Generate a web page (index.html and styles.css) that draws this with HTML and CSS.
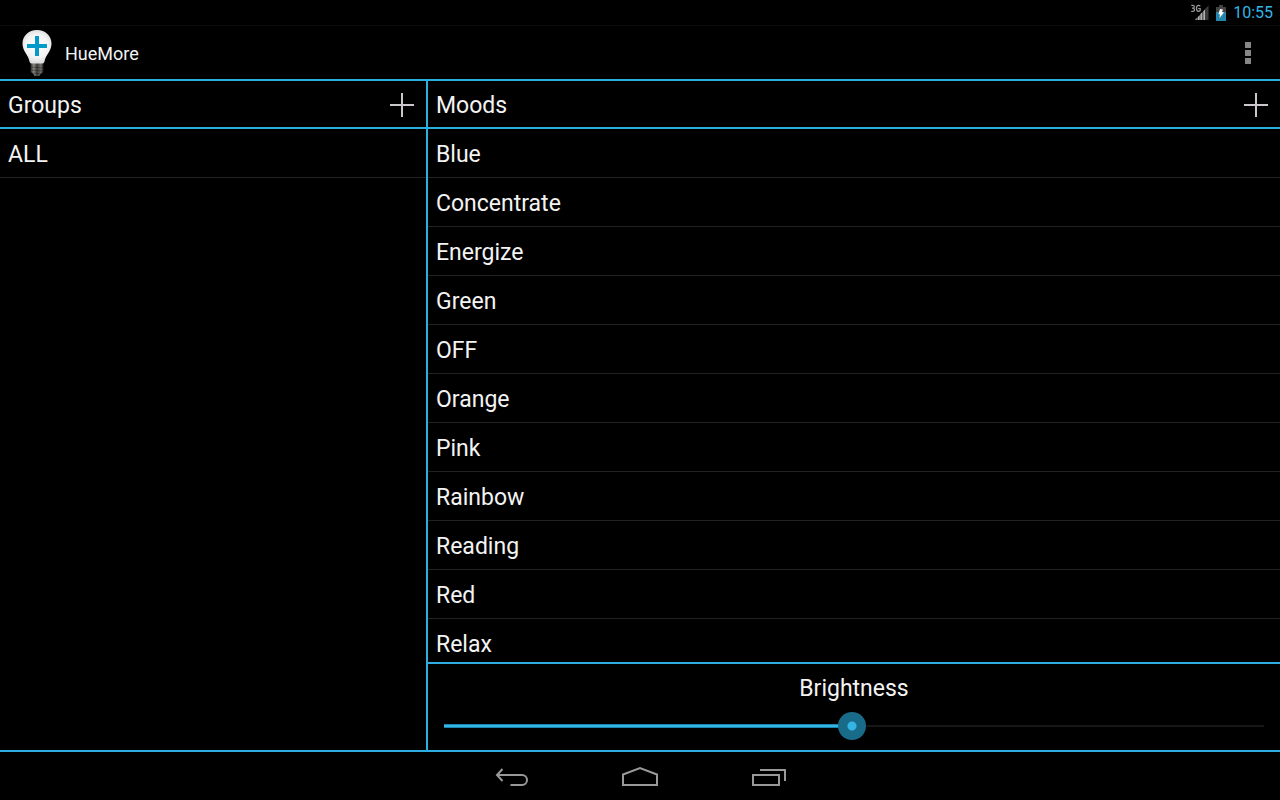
FILE: index.html
```html
<!DOCTYPE html>
<html lang="en">
<head>
<meta charset="utf-8">
<title>HueMore</title>
<meta name="viewport" content="width=device-width, initial-scale=1">
<link rel="stylesheet" href="styles.css">
</head>
<body>
<div class="status-bar">
  <svg class="signal" width="18" height="17" viewBox="0 0 18 17" role="img" aria-label="3G signal">
    <path d="M4 16l10-10.500V16z" fill="#5c5c5c"/>
    <path d="M14 16V5l3.500-3.500V16z" fill="#3a3a3a"/>
    <path d="M4.500 16v-1l1-1v2zM7 16v-3l1.500-1.500V16zM9.500 16v-6L11 8.500V16zM12.500 16V7L14 5.500V16z" fill="#b0b0b0"/>
    <g fill="none" stroke="#999" stroke-width="1.200">
      <path d="M.3 1.300h1.500q1.500 0 1.500 1.400T1.800 4.200H1h.8q1.700 0 1.700 1.600T1.800 7.300H.2"/>
      <path d="M9.200 2.300Q8.800 1.300 7.500 1.300q-2 0-2 3t2 3q1 0 1.700-.8V4.500H7.300"/>
    </g>
  </svg>
  <svg class="battery" width="10" height="16" viewBox="0 0 10 16" role="img" aria-label="Battery charging">
    <path d="M3 0h4v2h3v6H0V2h3z" fill="#444"/>
    <path d="M0 7h10v9H0z" fill="#2585ad"/>
    <path d="M4 4l3 .5L6 7l2 .5L3.500 13l.5-3.500L2.500 9z" fill="#fff"/>
  </svg>
  <time class="clock">10:55</time>
</div>
<header class="action-bar">
  <svg class="logo" width="32" height="48" viewBox="0 0 32 48" aria-hidden="true">
    <defs>
      <radialGradient id="glass" gradientUnits="userSpaceOnUse" cx="16" cy="17" r="21">
        <stop offset="0" stop-color="#fff"/>
        <stop offset=".55" stop-color="#f3f3f3"/>
        <stop offset="1" stop-color="#ccc"/>
      </radialGradient>
      <linearGradient id="metal">
        <stop offset="0" stop-color="#262626"/>
        <stop offset=".25" stop-color="#8c8a86"/>
        <stop offset=".5" stop-color="#3a3835"/>
        <stop offset=".8" stop-color="#77746f"/>
        <stop offset="1" stop-color="#1c1c1c"/>
      </linearGradient>
    </defs>
    <path d="M9.500 34h13v9l-3 2-1 2h-5l-1-2-3-2z" fill="url(#metal)"/>
    <path d="M10 38l12 1M10 41l12 1M12 44l8 1" stroke="#1c1c1c" stroke-width=".8" opacity=".6"/>
    <path d="M16 1C7.500 1 1.500 7 1.500 14.500c0 8 6 11.500 7 18q.3 2 2 2h11q1.700 0 2-2c1-6.500 7-10 7-18C30.500 7 24.500 1 16 1z" fill="url(#glass)"/>
    <path d="M14 7h4v8h8v4h-8v8h-4v-8H6v-4h8z" fill="#0499c9"/>
  </svg>
  <h1 class="title">HueMore</h1>
  <button class="overflow" type="button" aria-label="More options">
    <svg width="6" height="22" viewBox="0 0 6 22" fill="#868686"><path d="M0 0h6v6H0zM0 8h6v6H0zM0 16h6v6H0z"/></svg>
  </button>
</header>
<main class="panes">
  <section class="pane">
    <div class="pane-header">
      <h2 class="heading">Groups</h2>
      <button class="add" type="button" aria-label="Add group">
        <svg width="24" height="24" viewBox="0 0 24 24" fill="#cac6cc"><path d="M11 0h2v11h11v2H13v11h-2V13H0v-2h11z"/></svg>
      </button>
    </div>
    <ul class="list">
      <li class="item">ALL</li>
    </ul>
  </section>
  <section class="pane">
    <div class="pane-header">
      <h2 class="heading">Moods</h2>
      <button class="add" type="button" aria-label="Add mood">
        <svg width="24" height="24" viewBox="0 0 24 24" fill="#cac6cc"><path d="M11 0h2v11h11v2H13v11h-2V13H0v-2h11z"/></svg>
      </button>
    </div>
    <ul class="list">
      <li class="item">Blue</li>
      <li class="item">Concentrate</li>
      <li class="item">Energize</li>
      <li class="item">Green</li>
      <li class="item">OFF</li>
      <li class="item">Orange</li>
      <li class="item">Pink</li>
      <li class="item">Rainbow</li>
      <li class="item">Reading</li>
      <li class="item">Red</li>
      <li class="item">Relax</li>
    </ul>
    <div class="brightness">
      <label class="brightness-label" for="brightness">Brightness</label>
      <input class="slider" id="brightness" type="range" min="0" max="255" value="127">
    </div>
  </section>
</main>
<nav class="nav-bar" aria-label="System">
  <button class="nav-button" type="button" aria-label="Back">
    <svg width="36" height="24" viewBox="0 0 36 24" fill="none" stroke="#999" stroke-width="2"><path d="M8.500 5L3 11l5.500 6M3 11h25a5 5 0 0 1 0 10H16.500"/></svg>
  </button>
  <button class="nav-button" type="button" aria-label="Home">
    <svg width="36" height="24" viewBox="0 0 36 24" fill="none" stroke="#999" stroke-width="2"><path d="M1 21V10.500L18 4l17 6.500V21z"/></svg>
  </button>
  <button class="nav-button" type="button" aria-label="Recent apps">
    <svg width="36" height="24" viewBox="0 0 36 24" fill="none" stroke="#999" stroke-width="2"><path d="M3 11h26v10H3zM10 6h25v11"/></svg>
  </button>
</nav>
</body>
</html>
```
FILE: styles.css
```css
* {
  box-sizing: border-box;
}

body {
  display: flex;
  flex-direction: column;
  height: 100vh;
  margin: 0;
  background: #000;
  color: #f3f3f3;
  font-family: Roboto, "Noto Sans", sans-serif;
  font-size: 23px;
}

button {
  display: flex;
  align-items: center;
  justify-content: center;
  padding: 0;
  border: 0;
  background: none;
}

.status-bar {
  display: flex;
  flex: none;
  align-items: center;
  justify-content: flex-end;
  height: 26px;
  padding-right: 7px;
  border-bottom: 1px solid #0c0c0c;
}

.signal {
  margin-right: 7px;
}

.battery {
  margin-right: 7px;
}

.clock {
  color: #33b5e5;
  font-size: 16px;
  line-height: 24px;
}

.action-bar {
  display: flex;
  flex: none;
  align-items: center;
  height: 55px;
  padding-left: 21px;
  border-bottom: 2px solid #2caee0;
}

.title {
  flex: 1;
  margin: 0 0 0 12px;
  padding-top: 2px;
  font-size: 18px;
  font-weight: 400;
}

.overflow {
  width: 64px;
  height: 48px;
}

.panes {
  display: grid;
  flex: 1;
  grid-template-columns: 1fr 2fr;
  gap: 2px;
  min-height: 0;
  border-bottom: 2px solid #2caee0;
  background: #2caee0;
}

.pane {
  display: flex;
  flex-direction: column;
  min-width: 0;
  min-height: 0;
  background: #000;
}

.pane-header {
  display: flex;
  flex: none;
  align-items: center;
  justify-content: space-between;
  height: 48px;
  padding: 2px 0 0 8px;
  border-bottom: 2px solid #2caee0;
}

.heading {
  margin: 0;
  font-size: 23px;
  font-weight: 400;
}

.add {
  width: 48px;
  height: 44px;
}

.list {
  flex: 1;
  min-height: 0;
  margin: 0;
  padding: 0;
  overflow: hidden;
  list-style: none;
}

.item {
  height: 49px;
  padding-left: 8px;
  border-bottom: 1px solid #222;
  line-height: 52px;
}

.brightness {
  display: flex;
  flex: none;
  flex-direction: column;
  padding: 8px 16px;
  border-top: 2px solid #2caee0;
}

.brightness-label {
  line-height: 34px;
  text-align: center;
}

.slider {
  width: 100%;
  height: 28px;
  margin: 6px 0 2px;
  appearance: none;
  background:
    linear-gradient(#33b5e5, #33b5e5) left center / 50% 2px no-repeat,
    linear-gradient(#1b84ac, #1b84ac) left center / 50% 4px no-repeat,
    linear-gradient(#161616, #161616) left center / 100% 2px no-repeat;
}

.slider::-webkit-slider-thumb {
  width: 28px;
  height: 28px;
  appearance: none;
  border-radius: 50%;
  background: radial-gradient(circle, #33b5e5 4px, #196b8a 5px);
}

.nav-bar {
  display: flex;
  flex: none;
  justify-content: center;
  gap: 48px;
  height: 48px;
}

.nav-button {
  width: 80px;
  height: 48px;
}
```
